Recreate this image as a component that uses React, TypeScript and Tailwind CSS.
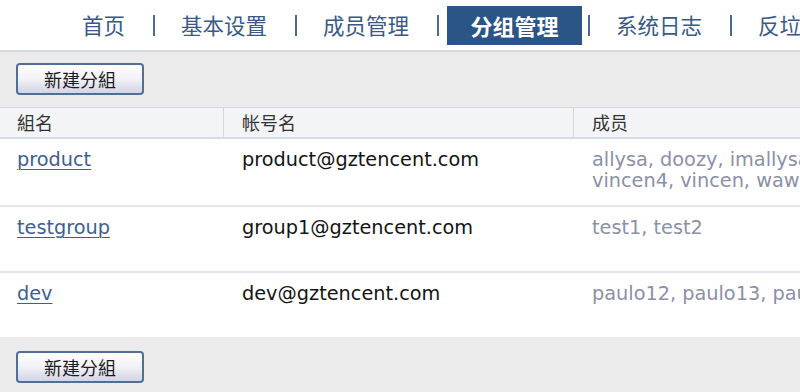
import React from "react";

function Sep({ className = "ml-[28px] mr-[26px]" }: { className?: string }) {
  return <span className={"inline-block w-[2px] h-[21px] bg-[#4a6890] shrink-0 " + className} />;
}

function NewButton() {
  return (
    <button className="w-[128px] h-[32px] rounded-[4px] border-2 border-[#4f6f96] bg-gradient-to-b from-[#ffffff] via-[#f1f1f7] to-[#d4d4e4] text-[18px] text-[#1c1c1c] flex items-center justify-center font-['Noto_Sans_CJK_SC',sans-serif] leading-none">
      新建分組
    </button>
  );
}

const rows = [
  {
    name: "product",
    email: "product@gztencent.com",
    members: ["allysa, doozy, imallysa, jerry, paulo12,", "vincen4, vincen, wawa"],
  },
  { name: "testgroup", email: "group1@gztencent.com", members: ["test1, test2"] },
  { name: "dev", email: "dev@gztencent.com", members: ["paulo12, paulo13, paulo14"] },
];

export default function App() {
  return (
    <div className="w-[800px] h-[392px] overflow-hidden bg-white font-['DejaVu_Sans','Noto_Sans_CJK_SC',sans-serif]">
      <nav className="h-[52px] border-b-2 border-[#d3dae4] flex items-center pl-[82px] whitespace-nowrap text-[21.5px] text-[#3a5a85] font-['Noto_Sans_CJK_SC',sans-serif] leading-none">
        <span className="shrink-0">首页</span>
        <Sep />
        <span className="shrink-0">基本设置</span>
        <Sep />
        <span className="shrink-0">成员管理</span>
        <Sep className="ml-[28px] mr-[8px]" />
        <span className="w-[135px] h-[39px] bg-[#2b5586] text-white font-bold text-[22px] flex items-center justify-center shrink-0">
          分组管理
        </span>
        <Sep className="ml-[6px] mr-[26px]" />
        <span className="shrink-0">系统日志</span>
        <Sep />
        <span className="shrink-0">反垃圾邮件</span>
      </nav>

      <div className="h-[55px] bg-[#ebebeb] pl-[16px] pt-[11px]">
        <NewButton />
      </div>

      <div className="border-t border-[#d4dae2] border-b-2 border-b-[#d6dce4] bg-[#f3f4f6] h-[32px] flex text-[18px] text-[#333] font-['Noto_Sans_CJK_SC',sans-serif]">
        <div className="w-[224px] shrink-0 pl-[17px] flex items-center border-r border-[#d6d6d6]">組名</div>
        <div className="w-[350px] shrink-0 pl-[18px] flex items-center border-r border-[#d6d6d6]">帐号名</div>
        <div className="w-[500px] shrink-0 pl-[18px] flex items-center">成员</div>
      </div>

      {rows.map((r, i) => (
        <div
          key={r.name}
          className={
            "h-[66px] flex text-[19.3px] leading-[21px] pt-[10px] whitespace-nowrap " +
            (i > 0 ? "border-t-2 border-[#e2e6ec]" : "")
          }
        >
          <div className="w-[224px] shrink-0 pl-[17px]">
            <a href="#" className="text-[#3e5f8f] underline underline-offset-[3px] decoration-1">
              {r.name}
            </a>
          </div>
          <div className="w-[350px] shrink-0 pl-[18px] text-[#141414]">{r.email}</div>
          <div className="w-[500px] shrink-0 pl-[18px] text-[#8a90a8]">
            {r.members.map((m) => (
              <div key={m}>{m}</div>
            ))}
          </div>
        </div>
      ))}

      <div className="h-[60px] bg-[#ebebeb] pl-[16px] pt-[14px]">
        <NewButton />
      </div>
    </div>
  );
}
